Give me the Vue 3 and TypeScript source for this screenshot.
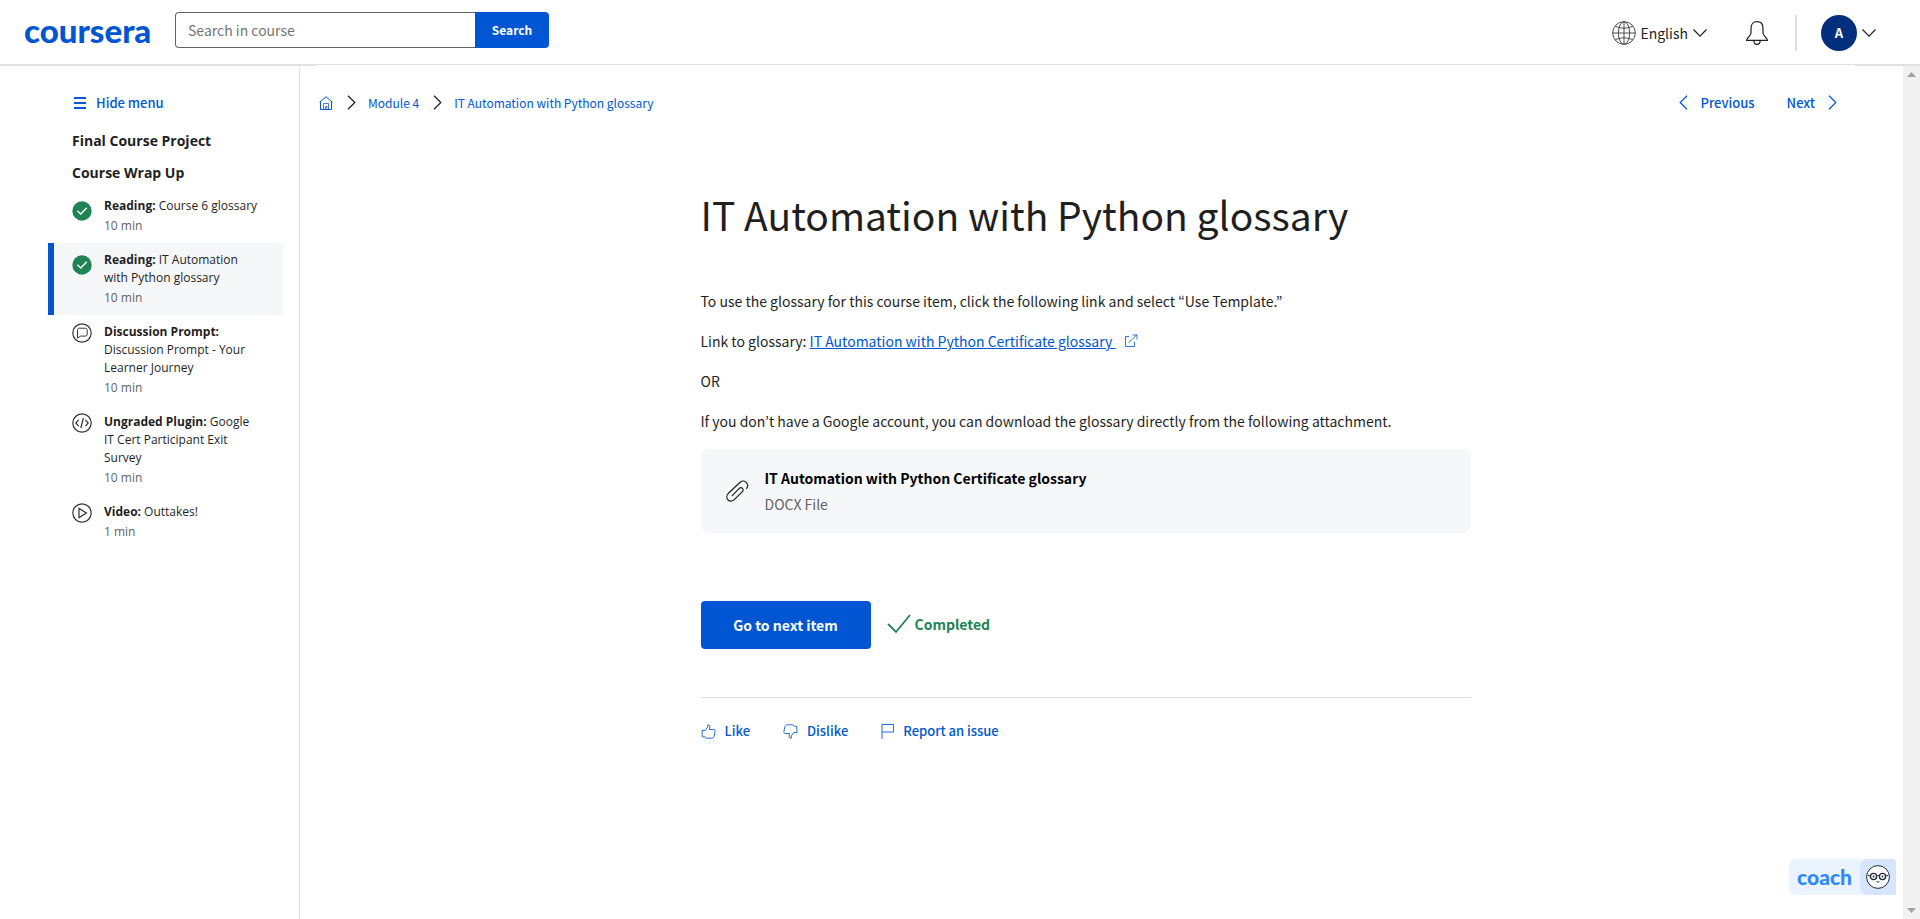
<script setup lang="ts">
import { ref } from 'vue'

type ItemIcon = 'done' | 'discussion' | 'plugin' | 'video'

interface CourseItem {
  kind: string
  title: string
  duration: string
  icon: ItemIcon
  current?: boolean
}

const query = ref('')

const items: CourseItem[] = [
  { kind: 'Reading:', title: 'Course 6 glossary', duration: '10 min', icon: 'done' },
  { kind: 'Reading:', title: 'IT Automation with Python glossary', duration: '10 min', icon: 'done', current: true },
  { kind: 'Discussion Prompt:', title: 'Discussion Prompt - Your Learner Journey', duration: '10 min', icon: 'discussion' },
  { kind: 'Ungraded Plugin:', title: 'Google IT Cert Participant Exit Survey', duration: '10 min', icon: 'plugin' },
  { kind: 'Video:', title: 'Outtakes!', duration: '1 min', icon: 'video' },
]
</script>

<template>
  <div class="page">
    <header class="header">
      <a class="logo" href="#" aria-label="Coursera home">coursera</a>
      <form class="search" role="search" @submit.prevent>
        <input v-model="query" type="text" placeholder="Search in course" aria-label="Search in course" />
        <button type="submit">Search</button>
      </form>
      <div class="account">
        <button class="plain language" type="button">
          <svg width="24" height="24" viewBox="0 0 24 24" fill="none" stroke="#4a4a4a">
            <circle cx="12" cy="12" r="11.3" />
            <ellipse cx="12" cy="12" rx="5.6" ry="11.3" />
            <path d="M12 .7v22.6M.7 12h22.6M3.3 5.2C8 7.800 16 7.800 20.700 5.200M3.300 18.800C8 16.200 16 16.200 20.700 18.800" />
          </svg>
          <span>English</span>
          <svg width="16" height="10" viewBox="0 0 16 10" fill="none" stroke="#1f1f1f" stroke-width="1.200"><path d="M1.500 1.500 8 8.200l6.500-6.700" /></svg>
        </button>
        <button class="plain bell" type="button" aria-label="Notifications">
          <svg width="24" height="26" viewBox="0 0 24 26" fill="none" stroke="#1f1f1f" stroke-width="1.200">
            <path d="M1.600 20.400c0-2.400 4-4 4.400-7.400V8c0-4 2.400-6.400 6-6.400S18 4 18 8v5c.4 3.400 4.400 5 4.400 7.400zM8.800 20.800c.2 4.800 6.200 4.800 6.400 0" />
          </svg>
        </button>
        <span class="divider"></span>
        <button class="plain profile" type="button" aria-label="Account menu">
          <span class="avatar">A</span>
          <svg width="16" height="10" viewBox="0 0 16 10" fill="none" stroke="#1f1f1f" stroke-width="1.200"><path d="M1.500 1.500 8 8.200l6.500-6.700" /></svg>
        </button>
      </div>
    </header>

    <div class="body">
      <nav class="sidebar" aria-label="Course items">
        <button class="plain hide" type="button">
          <svg width="12" height="12" viewBox="0 0 12 12" fill="#0056d2"><path d="M0 0h12v2H0zM0 5h12v2H0zM0 10h12v2H0z" /></svg>
          Hide menu
        </button>
        <h2>Final Course Project</h2>
        <h2>Course Wrap Up</h2>
        <ul>
          <li v-for="item in items" :key="item.kind + item.title">
            <a href="#" class="item" :class="{ current: item.current }">
              <svg class="item-icon" :class="{ done: item.icon === 'done' }" width="20" height="20" viewBox="0 0 20 20" fill="none" stroke="#333">
                <template v-if="item.icon === 'done'">
                  <circle cx="10" cy="10" r="9.700" fill="#1f8354" stroke="none" />
                  <path d="m5.400 9.800 3.400 3.300 6-6.300" stroke="#fff" stroke-width="1.400" />
                </template>
                <template v-else>
                  <circle cx="10" cy="10" r="9.200" stroke-width="1.200" />
                  <path v-if="item.icon === 'discussion'" d="M7.200 5.200h6c1.400 0 2 .7 2 2v3.900c0 1.400-.7 2-2 2H8.600l-3.100 2V7.200c0-1.300.5-2 1.700-2z" />
                  <path v-if="item.icon === 'plugin'" d="M6.600 6.800 3.800 10l2.800 3.200M13.400 6.800l2.800 3.200-2.800 3.200M11.400 5l-2.600 10" stroke-width="1.200" />
                  <path v-if="item.icon === 'video'" d="M7 5.400v9.200l7.400-4.600z" stroke-width="1.200" />
                </template>
              </svg>
              <span class="item-text">
                <span class="item-title"><strong>{{ item.kind }}</strong> {{ item.title }}</span>
                <span class="item-time">{{ item.duration }}</span>
              </span>
            </a>
          </li>
        </ul>
      </nav>

      <main class="main">
        <div class="toolbar">
          <nav class="crumbs" aria-label="Breadcrumb">
            <a href="#" aria-label="Course home">
              <svg width="14" height="14" viewBox="0 0 14 14" fill="none" stroke="#0056d2">
                <path d="M.6 6.300 7 .7l6.400 5.600M1.500 5.600v7.900h11V5.600" />
                <path d="M4.500 13.500v-6h5v6M6.500 13.500v-3h1.500v3" stroke-opacity=".75" />
              </svg>
            </a>
            <svg width="9" height="15" viewBox="0 0 9 15" fill="none" stroke="#1f1f1f" stroke-width="1.200"><path d="m1 .8 6.800 6.700L1 14.200" /></svg>
            <a href="#">Module 4</a>
            <svg width="9" height="15" viewBox="0 0 9 15" fill="none" stroke="#1f1f1f" stroke-width="1.200"><path d="m1 .8 6.800 6.700L1 14.200" /></svg>
            <a href="#">IT Automation with Python glossary</a>
          </nav>
          <nav class="pager" aria-label="Item navigation">
            <a href="#">
              <svg width="9" height="15" viewBox="0 0 9 15" fill="none" stroke="#0056d2" stroke-width="1.200"><path d="M8 .8 1.200 7.500 8 14.200" /></svg>
              Previous
            </a>
            <a href="#">
              Next
              <svg width="9" height="15" viewBox="0 0 9 15" fill="none" stroke="#0056d2" stroke-width="1.200"><path d="m1 .8 6.800 6.700L1 14.200" /></svg>
            </a>
          </nav>
        </div>

        <article class="article">
          <h1>IT Automation with Python glossary</h1>
          <p>To use the glossary for this course item, click the following link and select “Use Template.”</p>
          <p>
            Link to glossary:
            <a class="external" href="#"><span>IT Automation with Python Certificate glossary&nbsp;</span><svg width="14" height="14" viewBox="0 0 14 14" fill="none" stroke="#0056d2" stroke-opacity=".8"><path d="M5 2.500H1.500v10h9V8M4.500 8.800 12.800.8M8.500 1H13v4.500" /></svg></a>
          </p>
          <p>OR</p>
          <p>If you don’t have a Google account, you can download the glossary directly from the following attachment.</p>
          <a class="attachment" href="#">
            <svg width="24" height="24" viewBox="0 0 24 24" fill="none" stroke="#1f1f1f" stroke-width="1.200">
              <path d="M21.400 9.800c1.500-1.900 1.500-4.500 0-6.200-1.600-1.700-4.400-1.900-6.200-.3L3.400 14.300c-1.900 1.900-2 4.800-.4 6.600s4.200 1.700 6 0l8.200-8c1.200-1.200 1.200-2.600.3-3.500s-2.400-.8-3.500.3l-7.200 7.400" />
            </svg>
            <span class="file">
              <strong>IT Automation with Python Certificate glossary</strong>
              <span>DOCX File</span>
            </span>
          </a>
          <div class="actions">
            <button class="next" type="button">Go to next item</button>
            <span class="completed">
              <svg width="24" height="20" viewBox="0 0 24 20" fill="none" stroke="#1f8354" stroke-width="1.800"><path d="m1 10 8 8L23 1" /></svg>
              Completed
            </span>
          </div>
          <div class="feedback">
            <button class="plain" type="button">
              <svg width="15" height="15" viewBox="0 0 15 15" fill="none" stroke="#0056d2" stroke-opacity=".85">
                <path d="M1 6.500h3.200l2.500-3.300V.8c1.500-.3 2.200.7 2.100 2L8.500 5.500h4.300c1.200 0 1.500.8 1.300 1.800l-1 5c-.2 1.300-1 1.900-2.300 1.900H5.500l-1.700-1.400H1.300z" />
              </svg>
              Like
            </button>
            <button class="plain" type="button">
              <svg width="15" height="15" viewBox="0 0 15 15" fill="none" stroke="#0056d2" stroke-opacity=".85">
                <path d="M14 8.500h-3.200l-2.500 3.300v2.400c-1.500.3-2.200-.7-2.100-2l.3-2.700H2.200c-1.200 0-1.500-.8-1.300-1.800l1-5C2.100 1.400 2.900.8 4.200.8h5.300l1.700 1.400h2.500z" />
              </svg>
              Dislike
            </button>
            <button class="plain" type="button">
              <svg width="13" height="15" viewBox="0 0 13 15" fill="none" stroke="#0056d2" stroke-opacity=".85"><path d="M1 15V.5h11.500v7.500H1" /></svg>
              Report an issue
            </button>
          </div>
        </article>
      </main>

      <div class="scrollbar" aria-hidden="true">
        <svg width="9" height="5" viewBox="0 0 9 5" fill="#a3a3a3"><path d="M0 5h9L4.500 0z" /></svg>
        <svg width="9" height="5" viewBox="0 0 9 5" fill="#a3a3a3"><path d="M0 0h9L4.500 5z" /></svg>
      </div>
    </div>

    <button class="plain coach" type="button">
      <span class="coach-name">coach</span>
      <span class="coach-face">
        <svg width="24" height="24" viewBox="0 0 24 24" fill="none" stroke="#1f2a3d">
          <circle cx="12" cy="12" r="11.400" fill="#fff" />
          <circle cx="7.500" cy="11.500" r="3.100" stroke-width="1.300" />
          <circle cx="16.500" cy="11.500" r="3.100" stroke-width="1.300" />
          <path d="M10.500 11c.7-.7 2.300-.7 3 0M4.400 11 2 10.500M19.600 11l2.400-.5M10.500 16.500c.9.700 2.100.7 3 0" />
          <circle cx="7.500" cy="11.500" r=".9" fill="#1f2a3d" stroke="none" />
          <circle cx="16.500" cy="11.500" r=".9" fill="#1f2a3d" stroke="none" />
        </svg>
      </span>
    </button>
  </div>
</template>

<style>
body {
  margin: 0;
}
</style>

<style scoped>
.page {
  display: flex;
  flex-direction: column;
  min-height: 100vh;
  background: #fff;
  color: #1f1f1f;
  font: 14px/24px "Noto Sans CJK KR", sans-serif;
}
.page * {
  box-sizing: border-box;
}
a {
  color: #0056d2;
  text-decoration: none;
}
svg {
  display: block;
  flex: none;
}
button {
  font: inherit;
  cursor: pointer;
}
.plain {
  display: flex;
  align-items: center;
  padding: 0;
  border: 0;
  background: none;
  color: inherit;
}

.header {
  display: flex;
  align-items: center;
  height: 66px;
  padding: 0 43px 0 24px;
  border-bottom: 2px solid #e1e1e1;
}
.logo {
  width: 151px;
  padding-bottom: 4px;
  font: 900 33px/32px Lato, sans-serif;
}
.search {
  display: flex;
  height: 36px;
  margin-bottom: 4px;
}
.search input {
  width: 300px;
  padding: 0 12px;
  border: 1px solid #636363;
  border-right: 0;
  border-radius: 4px 0 0 4px;
  outline: 0;
  font: inherit;
}
.search input::placeholder {
  color: #757575;
  opacity: 1;
}
.search button {
  width: 74px;
  padding: 0;
  border: 0;
  border-radius: 0 4px 4px 0;
  background: #0056d2;
  color: #fff;
  font-size: 12px;
  font-weight: 700;
}
.account {
  display: flex;
  align-items: center;
  margin: 2px 0 0 auto;
}
.language {
  gap: 4px;
}
.bell {
  margin-left: 37px;
}
.divider {
  width: 2px;
  height: 36px;
  margin: 0 24px 0 26px;
  background: #e1e1e1;
}
.profile {
  gap: 4px;
}
.avatar {
  width: 36px;
  border-radius: 50%;
  background: #00307d;
  color: #fff;
  font-size: 13px;
  font-weight: 700;
  line-height: 36px;
}

.body {
  display: flex;
  flex: 1;
}
.sidebar {
  width: 300px;
  padding: 25px 16px 24px 48px;
  border-right: 1px solid #e1e1e1;
  font-family: "Open Sans", sans-serif;
}
.hide {
  gap: 10px;
  margin: 0 0 14px 26px;
  color: #0056d2;
  font: 500 13px/24px "Noto Sans CJK KR", sans-serif;
}
h2 {
  margin: 0 0 8px 24px;
  font-size: 14px;
  font-weight: 700;
  line-height: 24px;
}
ul {
  margin: -4px 0 0;
  padding: 0;
  list-style: none;
}
.item {
  display: flex;
  gap: 12px;
  padding: 8px 24px 8px 18px;
  border-left: 6px solid transparent;
  color: #1f1f1f;
  font-size: 12px;
  line-height: 18px;
}
.item.current {
  border-left-color: #0056d2;
  background: #f5f7f8;
}
.item-icon.done {
  margin-top: 4px;
}
.item-text {
  display: flex;
  flex-direction: column;
  gap: 2px;
}
.item-time {
  color: #636363;
}

.main {
  flex: 1;
  padding: 0 48px 40px 16px;
}
.toolbar {
  display: flex;
  justify-content: space-between;
  align-items: center;
  height: 75px;
  margin-top: -1px;
  padding: 0 18px 0 3px;
  background: #fff;
}
.crumbs,
.pager,
.pager a {
  display: flex;
  align-items: center;
}
.crumbs {
  gap: 12px;
  font-size: 12px;
}
.crumbs > svg {
  margin-left: 2px;
}
.pager {
  gap: 32px;
  font-size: 13px;
  font-weight: 500;
}
.pager a {
  gap: 13px;
}

.article {
  max-width: 770px;
  margin: 0 auto;
}
h1 {
  margin: 46px 0 47px;
  font-size: 39px;
  font-weight: 400;
  line-height: 56px;
}
p {
  margin: 0 0 16px;
}
.external span {
  text-decoration: underline;
}
.external svg {
  display: inline-block;
  margin-left: 8px;
  vertical-align: -1px;
}
.attachment {
  display: flex;
  align-items: center;
  gap: 16px;
  padding: 17px 24px;
  border-radius: 8px;
  background: #f5f7f8;
  color: #000;
}
.file {
  display: flex;
  flex-direction: column;
  gap: 2px;
}
.file span {
  color: #636363;
}
.actions {
  display: flex;
  align-items: center;
  gap: 16px;
  padding: 68px 0 48px;
  border-bottom: 1px solid #e1e1e1;
}
.next {
  width: 170px;
  height: 48px;
  padding: 0;
  border: 0;
  border-radius: 4px;
  background: #0056d2;
  color: #fff;
  font-weight: 700;
}
.completed {
  display: flex;
  align-items: center;
  gap: 4px;
  padding-bottom: 2px;
  color: #1f8354;
  font-weight: 700;
}
.feedback {
  display: flex;
  gap: 33px;
  margin-top: 21px;
}
.feedback button {
  gap: 9px;
  color: #0056d2;
  font-size: 13px;
  font-weight: 500;
}

.scrollbar {
  display: flex;
  flex-direction: column;
  justify-content: space-between;
  align-items: center;
  width: 17px;
  padding: 6px 0;
  background: #f1f1f1;
}

.coach {
  position: fixed;
  right: 24px;
  bottom: 24px;
  height: 36px;
  border-radius: 8px 4px 4px 8px;
  background: #ebf3ff;
}
.coach-name {
  width: 71px;
  color: #2d87ff;
  font: 900 21px/32px Lato, sans-serif;
}
.coach-face {
  padding: 6px;
  border-radius: 8px 4px 0 8px;
  background: #d6e6ff;
}
</style>
